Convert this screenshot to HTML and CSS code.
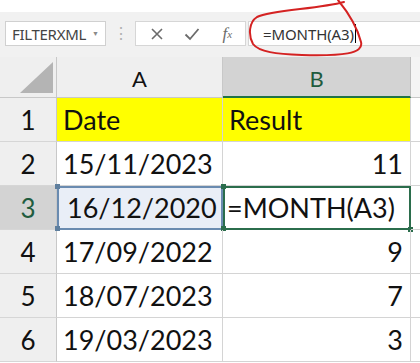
FILE: index.html
```html
<!DOCTYPE html>
<html lang="en">
<head>
    <meta charset="UTF-8">
    <meta name="viewport" content="width=device-width, initial-scale=1.0">
    <title>MONTH formula</title>
    <link rel="stylesheet" href="styles.css">
</head>
<body>
    <div class="top-strip"></div>
    <div class="toolbar">
        <div class="name-box">
            <span class="name-text">FILTERXML</span>
            <span class="name-arrow">&#9660;</span>
        </div>
        <div class="grip">&#8942;</div>
        <div class="fx-buttons">
            <span class="fx-btn cancel">
                <svg width="14" height="14" viewBox="0 0 14 14"><path d="M2 2 L12 12 M12 2 L2 12" stroke="#6b6b6b" stroke-width="1.6" fill="none"/></svg>
            </span>
            <span class="fx-btn enter">
                <svg width="16" height="14" viewBox="0 0 16 14"><path d="M1.5 7.5 L6 12 L14.5 2" stroke="#6b6b6b" stroke-width="1.8" fill="none"/></svg>
            </span>
            <span class="fx-btn fx"><i>f</i><sub>x</sub></span>
        </div>
        <div class="formula-input">
            <span class="formula-text">=MONTH(A3)</span><span class="caret"></span>
        </div>
    </div>

    <div class="sheet">
        <div class="corner"><span class="corner-tri"></span></div>
        <div class="col-head">A</div>
        <div class="col-head active">B</div>
        <div class="col-head rest"></div>

        <div class="row-head">1</div>
        <div class="cell yellow">Date</div>
        <div class="cell yellow">Result</div>
        <div class="cell rest"></div>

        <div class="row-head">2</div>
        <div class="cell">15/11/2023</div>
        <div class="cell num">11</div>
        <div class="cell rest"></div>

        <div class="row-head active">3</div>
        <div class="cell ref">16/12/2020<span class="dot tl"></span><span class="dot bl"></span></div>
        <div class="cell editing">=MONTH(A3)<span class="dot tl"></span><span class="dot bl"></span><span class="dot br"></span></div>
        <div class="cell rest"></div>

        <div class="row-head">4</div>
        <div class="cell">17/09/2022</div>
        <div class="cell num">9</div>
        <div class="cell rest"></div>

        <div class="row-head">5</div>
        <div class="cell">18/07/2023</div>
        <div class="cell num">7</div>
        <div class="cell rest"></div>

        <div class="row-head">6</div>
        <div class="cell">19/03/2023</div>
        <div class="cell num">3</div>
        <div class="cell rest"></div>
    </div>

    <!-- hand drawn mark around the formula -->
    <svg class="scribble" width="420" height="70" viewBox="0 0 420 70">
        <path d="M338 0 C347 11, 357 26, 361 42 C364 54, 342 56, 302 55 C276 54, 259 52, 253 44 C248 35, 249 22, 257 17 C272 10, 318 9, 344 2" stroke="#d42222" stroke-width="2" fill="none" stroke-linecap="round"/>
    </svg>
</body>
</html>
```

FILE: styles.css
```css
* {
    box-sizing: border-box;
}
body {
    margin: 0;
    width: 420px;
    height: 363px;
    overflow: hidden;
    background: #ffffff;
    font-family: "Noto Sans", Arial, sans-serif;
    position: relative;
}
.top-strip {
    height: 12px;
    background: #ffffff;
}
.toolbar {
    height: 45px;
    background: #f1f1f1;
    display: flex;
    align-items: flex-start;
    padding: 9px 0 0 5px;
}
.name-box {
    width: 101px;
    height: 25px;
    background: #ffffff;
    border: 1px solid #d0d0d0;
    display: flex;
    align-items: center;
    justify-content: space-between;
    padding: 0 6px 0 6px;
}
.name-text {
    font-size: 15px;
    color: #444444;
    letter-spacing: -0.3px;
}
.name-arrow {
    font-size: 7px;
    color: #8a8a8a;
}
.grip {
    width: 29px;
    text-align: center;
    color: #b0b0b0;
    font-size: 16px;
    line-height: 25px;
}
.fx-buttons {
    width: 111px;
    height: 25px;
    background: #ffffff;
    border: 1px solid #d6d6d6;
    display: flex;
    align-items: center;
    padding-left: 3px;
}
.fx-btn {
    display: flex;
    align-items: center;
    justify-content: center;
    width: 36px;
    height: 23px;
    color: #6b6b6b;
}
.fx-btn.fx {
    font-family: "Liberation Serif", serif;
    font-size: 17px;
}
.fx-btn.fx sub {
    font-size: 11px;
    font-style: italic;
    vertical-align: -1px;
}
.formula-input {
    flex: 1;
    height: 25px;
    margin-left: 2px;
    background: #ffffff;
    border: 1px solid #d6d6d6;
    border-right: none;
    display: flex;
    align-items: center;
    padding-left: 14px;
}
.formula-text {
    font-size: 15px;
    color: #333333;
    letter-spacing: -0.1px;
}
.caret {
    width: 1px;
    height: 19px;
    background: #000000;
    margin-left: 1px;
}
.sheet {
    display: grid;
    grid-template-columns: 57px 166px 188px 1fr;
    grid-template-rows: 41px repeat(6, 44px);
    font-family: Lato, "Liberation Sans", sans-serif;
    color: #111111;
}
.corner {
    background: #efefef;
    border-right: 1px solid #c8c8c8;
    border-bottom: 1px solid #c8c8c8;
    position: relative;
}
.corner-tri {
    position: absolute;
    right: 3px;
    bottom: 4px;
    width: 0;
    height: 0;
    border-left: 33px solid transparent;
    border-bottom: 31px solid #b4b4b4;
}
.col-head {
    background: #efefef;
    border-right: 1px solid #c8c8c8;
    border-bottom: 1px solid #c8c8c8;
    display: flex;
    align-items: center;
    justify-content: center;
    font-size: 22px;
    padding-top: 3px;
}
.col-head.active {
    background: #d3d3d3;
    color: #1f5c3e;
    border-bottom: 2px solid #217346;
    border-right: 1px solid #bdbdbd;
}
.col-head.rest {
    background: #f4f4f4;
    border-right: none;
}
.row-head {
    background: #efefef;
    border-right: 1px solid #c8c8c8;
    border-bottom: 1px solid #d6d6d6;
    display: flex;
    align-items: center;
    justify-content: center;
    font-size: 26px;
}
.row-head.active {
    background: #d3d3d3;
    color: #1f5c3e;
}
.cell {
    border-right: 1px solid #d4d4d4;
    border-bottom: 1px solid #d4d4d4;
    display: flex;
    align-items: center;
    padding-left: 6px;
    font-size: 27px;
    position: relative;
}
.cell.yellow {
    background: #ffff00;
}
.cell.num {
    justify-content: flex-end;
    padding-right: 7px;
}
.cell.rest {
    border-right: none;
}
.cell.ref {
    background: #e9eef7;
    outline: 2px solid #6a8bb0;
    outline-offset: -2px;
    padding-left: 10px;
}
.cell.editing {
    outline: 2px solid #2b6d4c;
    outline-offset: -2px;
    padding-left: 4px;
}
.dot {
    position: absolute;
    width: 5px;
    height: 5px;
    background: #5f7f9e;
}
.cell.editing .dot {
    background: #2b6d4c;
}
.dot.tl {
    left: -2px;
    top: -2px;
}
.dot.bl {
    left: -2px;
    bottom: -2px;
}
.dot.br {
    right: -3px;
    bottom: -3px;
}
.scribble {
    position: absolute;
    left: 0;
    top: 0;
    pointer-events: none;
}
```
